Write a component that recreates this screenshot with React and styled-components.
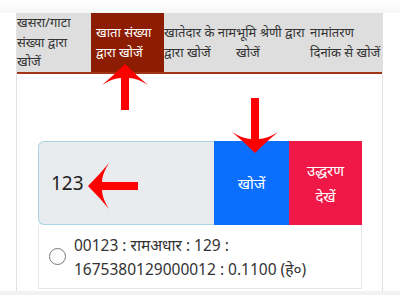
import React from "react";
import styled, { createGlobalStyle } from "styled-components";

const GlobalStyle = createGlobalStyle`
  html, body {
    margin: 0;
    padding: 0;
    background: #ffffff;
  }
  body {
    font-family: "Noto Sans", "Liberation Sans", sans-serif;
    color: #333;
  }
`;

const tabs = [
  { lines: ["खसरा/गाटा", "संख्या द्वारा", "खोजें"], width: 74 },
  { lines: ["खाता संख्या", "द्वारा खोजें"], width: 73, pad: 5, active: true },
  { lines: ["खातेदार के नाम", "द्वारा खोजें"], width: 72 },
  { lines: ["भूमि श्रेणी द्वारा", "खोजें"], width: 69 },
  { lines: ["नामांतरण", "दिनांक से खोजें"], width: 79, pad: 5 },
];

const App = () => (
  <>
    <GlobalStyle />
    <Page>
      <TopFade />
      <Panel>
        <TabBar>
          {tabs.map((t) => (
            <Tab
              key={t.lines.join(" ")}
              $active={t.active}
              $width={t.width}
              $pad={t.pad || 0}
            >
              <span>
                {t.lines.map((l, i) => (
                  <React.Fragment key={l}>
                    {i > 0 && <br />}
                    {l}
                  </React.Fragment>
                ))}
              </span>
            </Tab>
          ))}
        </TabBar>

        <Body>
          <InputGroup>
            <SearchInput defaultValue="123" />
            <Button $bg="#0b6efd" $width={75}>
              खोजें
            </Button>
            <Button $bg="#ef1847" $width={73}>
              उद्धरण
              <br />
              देखें
            </Button>
          </InputGroup>

          <ResultRow>
            <Radio />
            <ResultText>
              00123 : रामअधार : 129 :
              <br />
              1675380129000012 : 0.1100 (हे०)
            </ResultText>
          </ResultRow>
        </Body>
      </Panel>
      <BottomStrip />

      {/* red annotation arrows drawn over the screenshot */}
      <Arrow x={125} y={64} rot={0} len={46} />
      <Arrow x={255} y={153} rot={180} len={55} />
      <Arrow x={88} y={186} rot={-90} len={50} />
    </Page>
  </>
);

const Arrow = ({ x, y, rot, len }) => (
  <ArrowSvg
    width="140"
    height="140"
    viewBox="-70 -70 140 140"
    style={{ left: x - 70, top: y - 70, transform: `rotate(${rot}deg)` }}
  >
    <path
      d={`M0,0 Q12,12 23,21 Q12,14 4,14 L4,${len} L-4,${len} L-4,14 Q-12,14 -23,21 Q-12,12 0,0 Z`}
      fill="#ff0000"
    />
  </ArrowSvg>
);

const Page = styled.div`
  position: relative;
  width: 400px;
  height: 295px;
  overflow: hidden;
  background: #fff;
`;

const TopFade = styled.div`
  height: 13px;
  background: linear-gradient(#ffffff, #f6f6f6);
`;

const Panel = styled.div`
  margin: 0 17px 0 16px;
  border-left: 1px solid #e2e2e2;
  border-right: 1px solid #e2e2e2;
  height: 278px;
`;

const TabBar = styled.div`
  display: flex;
  height: 59px;
  background: #dedede;
  border-bottom: 2px solid #a23417;
`;

const Tab = styled.div`
  display: flex;
  align-items: center;
  flex: 0 0 ${(p) => p.$width}px;
  padding-left: ${(p) => p.$pad}px;
  box-sizing: border-box;
  white-space: nowrap;
  font-size: 13px;
  line-height: 19.5px;
  color: ${(p) => (p.$active ? "#ffffff" : "#333333")};
  background: ${(p) => (p.$active ? "#8c1d02" : "transparent")};
`;

const Body = styled.div`
  padding: 67px 20px 0 21px;
`;

const InputGroup = styled.div`
  display: flex;
  height: 84px;
`;

const SearchInput = styled.input`
  width: 176px;
  flex: 0 0 176px;
  box-sizing: border-box;
  height: 84px;
  margin: 0;
  padding: 0 0 0 12px;
  border: 1px solid #a9d4e3;
  border-right: none;
  border-radius: 6px 0 0 6px;
  background: #e9ecef;
  font-family: "Noto Sans", "Liberation Sans", sans-serif;
  font-size: 19px;
  color: #222;
  outline: none;
`;

const Button = styled.div`
  flex: 0 0 ${(p) => p.$width}px;
  display: flex;
  align-items: center;
  justify-content: center;
  text-align: center;
  background: ${(p) => p.$bg};
  color: #fff;
  font-size: 15px;
  line-height: 26px;
`;

const ResultRow = styled.div`
  display: flex;
  align-items: center;
  height: 63px;
  border: 1px solid #e6e6e6;
  border-top: none;
  padding-left: 10px;
`;

const Radio = styled.span`
  flex: 0 0 auto;
  width: 15px;
  height: 15px;
  border: 1px solid #777;
  border-radius: 50%;
  margin-right: 8px;
`;

const ResultText = styled.div`
  font-size: 15.5px;
  line-height: 24px;
  color: #333;
`;

const BottomStrip = styled.div`
  height: 4px;
  background: #f2f2f2;
`;

const ArrowSvg = styled.svg`
  position: absolute;
  pointer-events: none;
`;

export default App;
